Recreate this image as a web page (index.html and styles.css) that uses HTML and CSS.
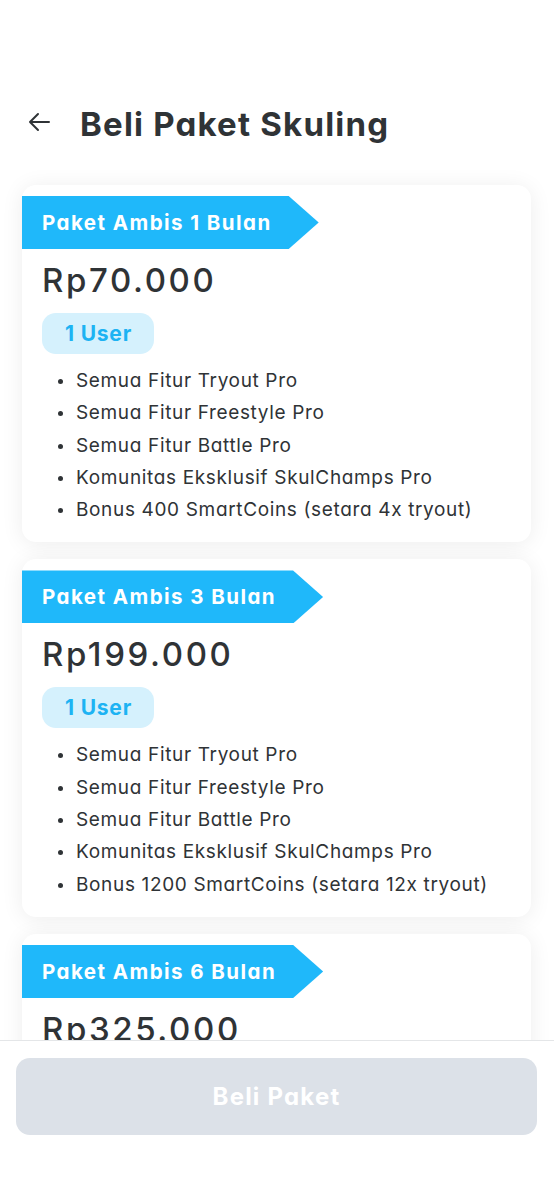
FILE: index.html
```html
<!DOCTYPE html>
<html lang="id">
<head>
<meta charset="utf-8">
<title>Beli Paket Skuling</title>
<link rel="stylesheet" href="styles.css">
</head>
<body>
<div class="screen">
  <header class="header">
    <svg class="back" width="22" height="20" viewBox="0 0 22 20" aria-hidden="true">
      <path d="M21 10H2M10 2L2 10l8 8" fill="none" stroke="#2f3336" stroke-width="2" stroke-linecap="round" stroke-linejoin="round"/>
    </svg>
    <h1 class="title">Beli Paket Skuling</h1>
  </header>

  <main class="list">
    <section class="card">
      <div class="ribbon">Paket Ambis 1 Bulan</div>
      <div class="price">Rp70.000</div>
      <div class="pill">1 User</div>
      <ul class="features">
        <li>Semua Fitur Tryout Pro</li>
        <li>Semua Fitur Freestyle Pro</li>
        <li>Semua Fitur Battle Pro</li>
        <li>Komunitas Eksklusif SkulChamps Pro</li>
        <li>Bonus 400 SmartCoins (setara 4x tryout)</li>
      </ul>
    </section>

    <section class="card">
      <div class="ribbon">Paket Ambis 3 Bulan</div>
      <div class="price">Rp199.000</div>
      <div class="pill">1 User</div>
      <ul class="features">
        <li>Semua Fitur Tryout Pro</li>
        <li>Semua Fitur Freestyle Pro</li>
        <li>Semua Fitur Battle Pro</li>
        <li>Komunitas Eksklusif SkulChamps Pro</li>
        <li>Bonus 1200 SmartCoins (setara 12x tryout)</li>
      </ul>
    </section>

    <section class="card">
      <div class="ribbon">Paket Ambis 6 Bulan</div>
      <div class="price">Rp325.000</div>
    </section>
  </main>

  <footer class="footer">
    <button class="buy" type="button">Beli Paket</button>
  </footer>
</div>
</body>
</html>
```

FILE: styles.css
```css
* { box-sizing: border-box; }

html, body {
  margin: 0;
  padding: 0;
  background: #ffffff;
}

body {
  font-family: Inter, "Noto Sans", "DejaVu Sans", sans-serif;
  font-feature-settings: "cv11" 1;
  color: #2f3336;
}

.screen {
  height: 1200px;
  display: flex;
  flex-direction: column;
  overflow: hidden;
}

.header {
  display: flex;
  align-items: flex-start;
  gap: 30px;
  padding: 104px 22px 0 28px;
  height: 170px;
}

.back {
  margin-top: 8px;
  flex: none;
}

.title {
  margin: 0;
  font-size: 33px;
  line-height: 40px;
  font-weight: 700;
  color: #2f3336;
  letter-spacing: 1.2px;
}

.list {
  flex: 1;
  overflow: hidden;
  padding: 15px 23px 0 22px;
  display: flex;
  flex-direction: column;
  gap: 17px;
}

.card {
  flex: none;
  background: #ffffff;
  border-radius: 14px;
  box-shadow: 0 2px 22px rgba(0, 0, 0, 0.075);
  padding: 11px 0 16px;
}

.ribbon {
  display: inline-block;
  height: 53px;
  line-height: 53px;
  padding: 0 47px 0 20px;
  background: #1fb8fa;
  color: #ffffff;
  font-size: 20.5px;
  font-weight: 700;
  letter-spacing: 1.45px;
  clip-path: polygon(0 0, calc(100% - 30px) 0, 100% 50%, calc(100% - 30px) 100%, 0 100%);
}

.price {
  margin: 9px 0 0 20px;
  font-size: 33px;
  line-height: 44px;
  font-weight: 500;
  color: #2f3336;
  letter-spacing: 2.6px;
}

.pill {
  display: inline-block;
  margin: 11px 0 0 20px;
  height: 41px;
  line-height: 41px;
  padding: 0 22px 0 23px;
  border-radius: 14px;
  background: #d5f1fd;
  color: #1db3f3;
  font-size: 21px;
  font-weight: 700;
  letter-spacing: 0.8px;
}

.features {
  list-style: none;
  margin: 11px 0 0;
  padding: 0 0 0 54px;
}

.features li {
  position: relative;
  font-size: 19px;
  line-height: 32.3px;
  letter-spacing: 0.65px;
  color: #2f3336;
}

.features li::before {
  content: "";
  position: absolute;
  left: -18px;
  top: 14px;
  width: 5px;
  height: 5px;
  border-radius: 50%;
  background: #2f3336;
}

.footer {
  flex: none;
  height: 160px;
  background: #ffffff;
  border-top: 1px solid #e4e6e8;
  padding: 17px 17px 0 16px;
}

.buy {
  display: block;
  width: 100%;
  height: 77px;
  border: 0;
  border-radius: 14px;
  background: #dce1e8;
  color: #ffffff;
  font-family: inherit;
  font-feature-settings: "cv11" 1;
  font-size: 24px;
  font-weight: 700;
  letter-spacing: 1.2px;
}
```
